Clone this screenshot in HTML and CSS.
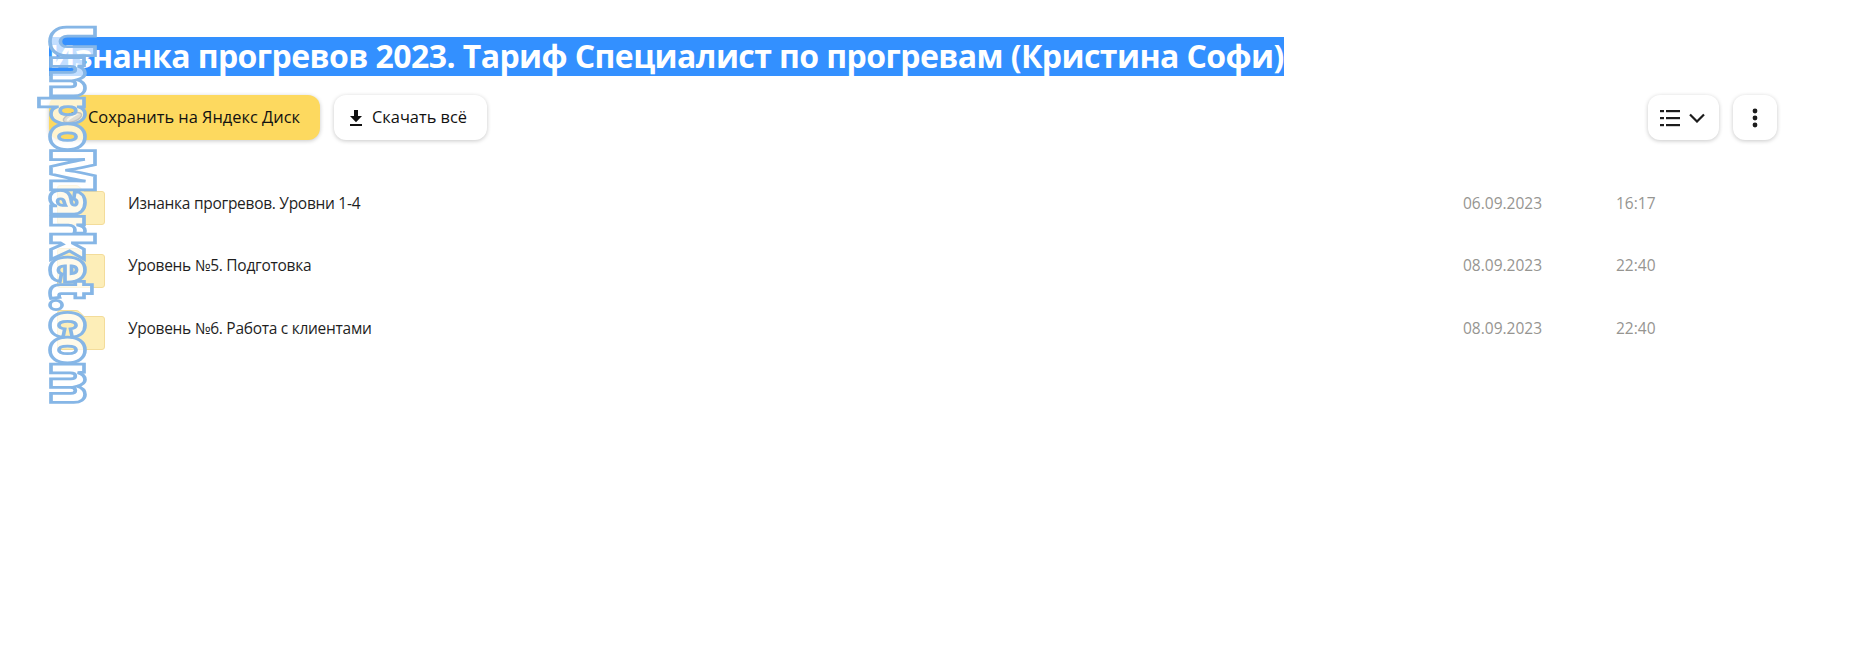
FILE: index.html
```html
<!DOCTYPE html>
<html lang="ru">
<head>
<meta charset="utf-8">
<title>Изнанка прогревов 2023</title>
<link rel="stylesheet" href="styles.css">
</head>
<body>
<main class="page">
  <h1 class="title"><span class="title-text">Изнанка прогревов 2023. Тариф Специалист по прогревам (Кристина Софи)</span></h1>
  <div class="toolbar">
    <div class="btn-group">
      <button class="btn btn-save">
        <svg class="ico-disk" viewBox="0 0 24 14" width="21" height="13"><ellipse cx="12" cy="7" rx="11" ry="4.800" transform="rotate(-20 12 7)" fill="#8f8a6e" stroke="#2f2f2f" stroke-width="1.600"/><path d="M5 10C9 5 14 3.500 20 3C15 5 11 8 7 11Z" fill="#e9e2b8"/></svg>
        <span class="btn-label">Сохранить на Яндекс Диск</span>
      </button>
      <button class="btn btn-dl">
        <svg viewBox="0 0 14 16" width="14" height="16"><path d="M5 0h4v6h4L7 12.200 1 6h4z" fill="#111"/><rect x="1" y="14" width="12" height="2" fill="#111"/></svg>
        <span class="btn-label">Скачать всё</span>
      </button>
    </div>
    <div class="btn-group">
      <button class="btn btn-view" aria-label="Вид">
        <svg viewBox="0 0 20 18" width="20" height="18"><g fill="#1c1c1c"><rect x="0" y="1" width="4" height="2.200"/><rect x="6" y="1" width="14" height="2.200"/><rect x="0" y="8" width="4" height="2.200"/><rect x="6" y="8" width="14" height="2.200"/><rect x="0" y="15" width="4" height="2.200"/><rect x="6" y="15" width="14" height="2.200"/></g></svg>
        <svg viewBox="0 0 16 10" width="16" height="10"><path d="M1 1.500l7 7 7-7" fill="none" stroke="#1c1c1c" stroke-width="2.200"/></svg>
      </button>
      <button class="btn btn-more" aria-label="Ещё">
        <svg viewBox="0 0 6 20" width="6" height="20"><g fill="#1c1c1c"><circle cx="3" cy="3" r="2.400"/><circle cx="3" cy="10" r="2.400"/><circle cx="3" cy="17" r="2.400"/></g></svg>
      </button>
    </div>
  </div>
  <div class="list">
    <div class="row">
      <svg class="folder" viewBox="0 0 48 40" width="48" height="40"><path d="M3 .5h16q2 0 3.500 1.500L27 6.500H45a2.500 2.500 0 0 1 2.500 2.500V37a2.500 2.500 0 0 1-2.500 2.500H3A2.500 2.500 0 0 1 .5 37V3A2.500 2.500 0 0 1 3 .5z" fill="#fdeeb8" stroke="#f3dc9a"/></svg>
      <span class="name">Изнанка прогревов. Уровни 1-4</span>
      <span class="meta">06.09.2023</span>
      <span class="meta">16:17</span>
    </div>
    <div class="row">
      <svg class="folder" viewBox="0 0 48 40" width="48" height="40"><path d="M3 .5h16q2 0 3.500 1.500L27 6.500H45a2.500 2.500 0 0 1 2.500 2.500V37a2.500 2.500 0 0 1-2.500 2.500H3A2.500 2.500 0 0 1 .5 37V3A2.500 2.500 0 0 1 3 .5z" fill="#fdeeb8" stroke="#f3dc9a"/></svg>
      <span class="name">Уровень №5. Подготовка</span>
      <span class="meta">08.09.2023</span>
      <span class="meta">22:40</span>
    </div>
    <div class="row">
      <svg class="folder" viewBox="0 0 48 40" width="48" height="40"><path d="M3 .5h16q2 0 3.500 1.500L27 6.500H45a2.500 2.500 0 0 1 2.500 2.500V37a2.500 2.500 0 0 1-2.500 2.500H3A2.500 2.500 0 0 1 .5 37V3A2.500 2.500 0 0 1 3 .5z" fill="#fdeeb8" stroke="#f3dc9a"/></svg>
      <span class="name">Уровень №6. Работа с клиентами</span>
      <span class="meta">08.09.2023</span>
      <span class="meta">22:40</span>
    </div>
  </div>
</main>
<div class="watermark">UmpoMarket.com</div>
</body>
</html>
```
FILE: styles.css
```css
* { box-sizing: border-box; }
html, body { margin: 0; background: #fff; }
body { font-family: "Open Sans", "Noto Sans", sans-serif; color: #1a1a1a; overflow: hidden; height: 661px; position: relative; }
.page { padding: 37px 82px 0 49px; }
.title { margin: 0; font-size: 32px; font-weight: 700; line-height: 38px; letter-spacing: -0.58px; height: 39px; white-space: nowrap; }
.title-text { display: inline-block; background: #3390ff; color: #fff; height: 39px; }
.toolbar { display: flex; justify-content: space-between; margin-top: 19px; }
.btn-group { display: flex; gap: 14px; }
.btn { height: 45px; border: 0; border-radius: 12px; background: #fff; font: inherit; font-size: 16.4px; color: #111; display: flex; align-items: center; padding: 0; box-shadow: 0 1px 4px rgba(0,0,0,.22); }
.btn-label { padding-bottom: 3px; }
.btn-save { width: 271px; background: #fdd95f; padding-left: 13px; gap: 5px; }
.btn-dl { width: 153px; padding-left: 15px; gap: 9px; }
.btn-view { width: 71px; padding-left: 12px; gap: 9px; }
.btn-more { width: 44px; justify-content: center; }
.list { margin-top: 34px; display: grid; grid-auto-rows: 62.5px; }
.row { display: grid; grid-template-columns: 48px 1fr 153px 161px; align-items: center; padding-left: 8px; font-size: 15.5px; }
.name { padding: 0 0 5px 23px; color: #1f1f1f; letter-spacing: -0.28px; }
.folder { display: block; }
.meta { color: #969591; padding-bottom: 5px; }
.watermark { position: absolute; left: 40px; top: 25px; writing-mode: vertical-rl; transform: scale(1.22, .91); transform-origin: 0 0; font-family: "Inter", "Liberation Sans", sans-serif; font-weight: 900; font-size: 50px; line-height: 54px; letter-spacing: -2.8px; color: rgba(255,255,255,.7); -webkit-text-stroke: 3px #86b6e6; white-space: nowrap; }
```
